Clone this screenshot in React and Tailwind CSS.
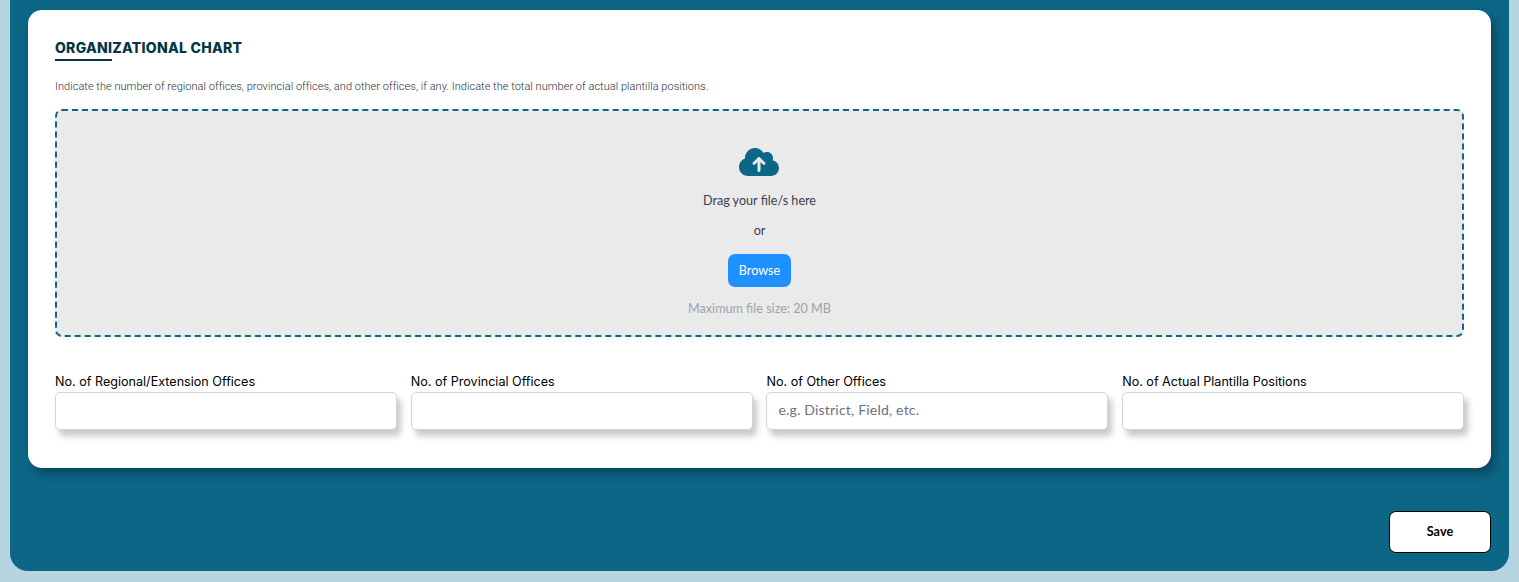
import { FaCloudArrowUp } from "react-icons/fa6";

const fields = [
  { label: "No. of Regional/Extension Offices" },
  { label: "No. of Provincial Offices" },
  { label: "No. of Other Offices", placeholder: "e.g. District, Field, etc." },
  { label: "No. of Actual Plantilla Positions" },
];

function Dropzone() {
  return (
    <div className="mt-3 flex h-[228px] flex-col items-center rounded-[7px] border-2 border-dashed border-[#0c6686] bg-[#eaeaea] pt-[35px] font-['Lato',sans-serif] text-[12.6px] leading-5 text-[#374151]">
      <FaCloudArrowUp className="mr-px h-8 w-10 text-[#0c6686]" />
      <p className="mt-[13px]">Drag your file/s here</p>
      <p className="mt-2.5">or</p>
      <button className="mt-[13px] h-[33px] w-[63px] rounded-[7px] bg-[#1e90ff] pt-px text-[12.6px] text-white">Browse</button>
      <p className="mt-3 text-[#9ca3af]">Maximum file size: 20 MB</p>
    </div>
  );
}

function Field({ label, placeholder }) {
  return (
    <label className="flex flex-1 flex-col">
      <span className="text-[12.6px] leading-5 text-black">{label}</span>
      <input
        placeholder={placeholder}
        className="h-[38px] w-full rounded-[5px] border border-[#d1d5db] bg-white px-[11px] pb-[3px] font-['Lato',sans-serif] text-[14px] tracking-[0.2px] shadow-[4px_6px_6px_rgba(0,0,0,0.22)] placeholder:text-[#6b7280]"
      />
    </label>
  );
}

export default function App() {
  return (
    <div className="h-[582px] overflow-hidden bg-[#b7d5e0] px-2.5 font-['Inter',sans-serif]">
      <main className="flex h-[571px] flex-col rounded-b-[18px] bg-[#0c6686] px-[18px] pt-2.5">
        <section className="h-[458px] rounded-[14px] bg-white px-[27px] pt-[27px] shadow-[4px_6px_10px_rgba(0,0,0,0.3)]">
          <h1 className="text-[14px] leading-[22px] font-extrabold tracking-[0.27px] text-[#053545]">ORGANIZATIONAL CHART</h1>
          <div className="h-0.5 w-[57px] bg-[#053545]" />
          <p className="mt-4 font-['Roboto',sans-serif] text-[11px] leading-5 font-light tracking-[0.035px] text-[#27303d]">
            Indicate the number of regional offices, provincial offices, and other offices, if any. Indicate the total number of actual plantilla positions.
          </p>
          <Dropzone />
          <div className="mt-[35px] flex gap-[13.9px]">
            {fields.map((f) => (
              <Field key={f.label} {...f} />
            ))}
          </div>
        </section>
        <button className="mt-[43px] h-[42px] w-[102px] self-end rounded-[7px] border border-black bg-white pt-px font-['Lato',sans-serif] text-[12.6px] font-bold tracking-[0.1px] text-black">Save</button>
      </main>
    </div>
  );
}
